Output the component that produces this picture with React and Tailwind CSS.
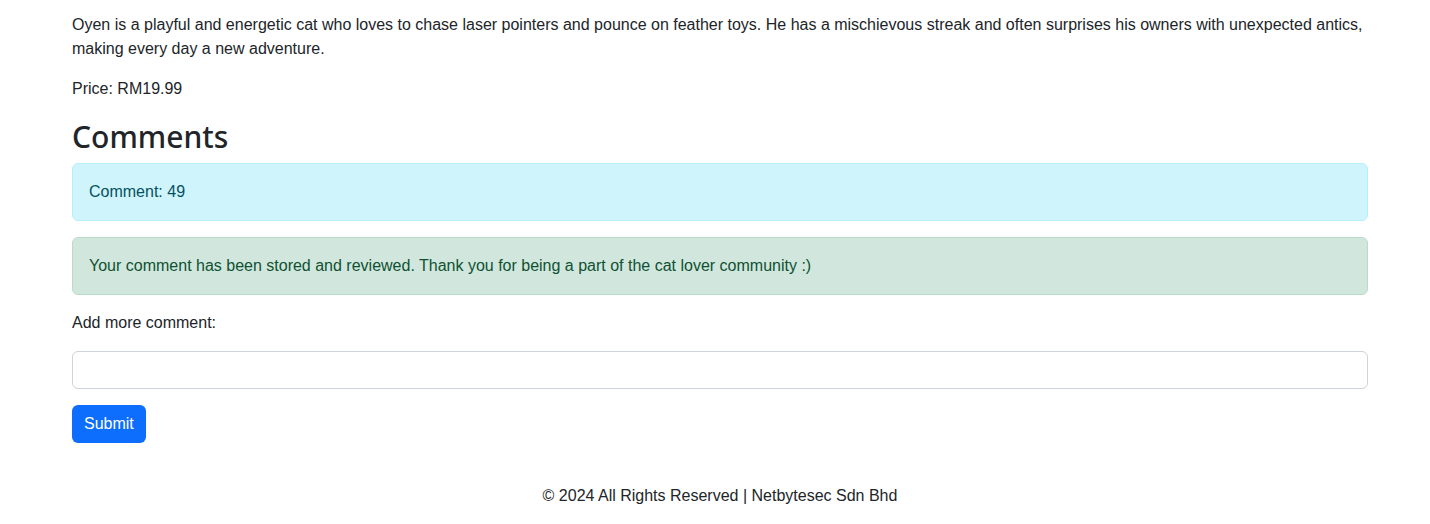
import React from "react";

export default function App() {
  return (
    <div className="min-h-[524px] bg-white text-[#212529] text-[16px] leading-6 font-['Liberation_Sans',Arial,sans-serif]">
      <main className="ml-[72px] w-[1296px] pt-[13px]">
        <p className="mb-4">
          Oyen is a playful and energetic cat who loves to chase laser pointers and pounce on feather toys. He has a
          mischievous streak and often surprises his owners with unexpected antics, making every day a new adventure.
        </p>
        <p className="mb-4">Price: RM19.99</p>

        <h2 className="mb-2 h-[38px] font-['Noto_Sans',sans-serif] text-[30px] font-medium leading-[40px]">Comments</h2>

        <div className="mb-4 rounded-md border border-[#b6effb] bg-[#cff4fc] px-4 py-4 text-[#055160]">Comment: 49</div>
        <div className="mb-4 rounded-md border border-[#badbcc] bg-[#d1e7dd] px-4 py-4 text-[#0f5132]">
          Your comment has been stored and reviewed. Thank you for being a part of the cat lover community :)
        </div>

        <form onSubmit={(e) => e.preventDefault()}>
          <label htmlFor="comment" className="mb-4 block">
            Add more comment:
          </label>
          <input
            id="comment"
            type="text"
            className="mb-4 block h-[38px] w-full rounded-md border border-[#ced4da] px-3 outline-none"
          />
          <button type="submit" className="h-[38px] rounded-md bg-[#0d6efd] px-3 text-white">
            Submit
          </button>
        </form>

        <footer className="pt-[41px] pb-4 text-center">© 2024 All Rights Reserved | Netbytesec Sdn Bhd</footer>
      </main>
    </div>
  );
}
